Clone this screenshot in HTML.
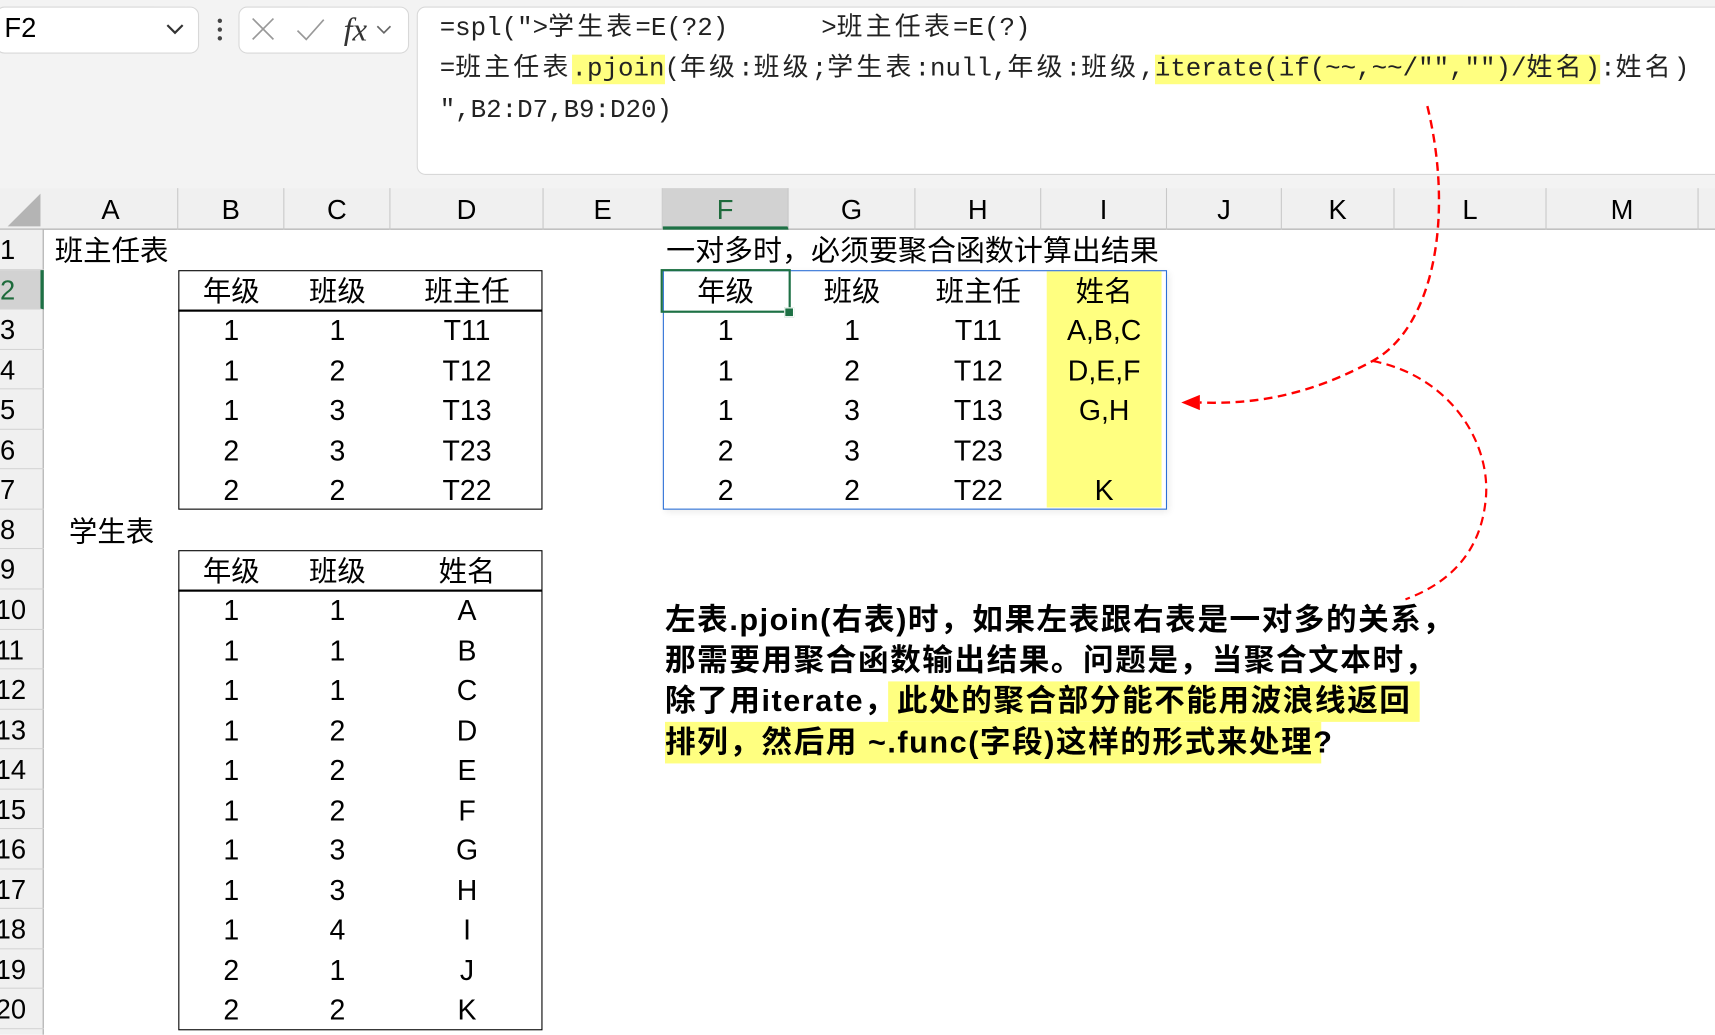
<!DOCTYPE html>
<html><head><meta charset="utf-8"><style>
html,body{margin:0;padding:0;width:1715px;height:1035px;overflow:hidden;background:#fff}
#w{position:absolute;left:0;top:0;width:1568px;height:946px;transform:scale(1.09375);transform-origin:0 0;font-family:"Liberation Sans","Noto Sans CJK SC",sans-serif;color:#000}
.a{position:absolute}
.c{position:absolute;height:36.5px;line-height:38px;text-align:center;font-size:26px}
.hd{position:absolute;top:172px;height:38px;line-height:40px;text-align:center;font-size:25px;border-right:1px solid #c8c8c8;box-sizing:border-box}
.rh{position:absolute;left:0;width:40px;height:36.55px;line-height:38px;font-size:25px;border-bottom:1px solid #d4d4d4;box-sizing:border-box;text-indent:0px}
.f{font-family:"Liberation Mono","Noto Sans CJK SC",monospace;font-size:23.6px;white-space:pre;position:absolute;left:402px;color:#222}
.k{letter-spacing:3px}
.y{background:#ffff80}
.p{position:absolute;left:608px;font-weight:bold;font-size:28px;letter-spacing:1.4px;white-space:nowrap;height:37px;line-height:37px}
</style></head><body><div id="w">
<div class="a" style="left:0;top:0;width:1568px;height:172px;background:#f3f3f3"></div>
<div class="a" style="left:-4px;top:6px;width:184px;height:41px;background:#fff;border:1px solid #d8d8d8;border-radius:8px"></div>
<div class="a" style="left:4px;top:10px;font-size:25px;line-height:32px">F2</div>
<svg class="a" style="left:150px;top:18px" width="20" height="16"><path d="M3 5 L10 12 L17 5" stroke="#333" stroke-width="2" fill="none"/></svg>
<div class="a" style="left:199px;top:17px;width:4px;height:4px;background:#444;border-radius:2px"></div>
<div class="a" style="left:199px;top:25px;width:4px;height:4px;background:#444;border-radius:2px"></div>
<div class="a" style="left:199px;top:33px;width:4px;height:4px;background:#444;border-radius:2px"></div>
<div class="a" style="left:218px;top:6px;width:154px;height:41px;background:#fff;border:1px solid #d8d8d8;border-radius:8px"></div>
<svg class="a" style="left:228px;top:12px" width="140" height="30"><path d="M3 5 L22 24 M22 5 L3 24" stroke="#999" stroke-width="1.5"/><path d="M44 16 L52 24 L68 6" stroke="#999" stroke-width="1.5" fill="none"/><text x="86" y="25" font-family="Liberation Serif,serif" font-style="italic" font-size="30" fill="#333">fx</text><path d="M117 12 L123 18 L129 12" stroke="#666" stroke-width="1.5" fill="none"/></svg>
<div class="a" style="left:381px;top:6px;width:1200px;height:152px;background:#fff;border:1px solid #d8d8d8;border-radius:8px"></div>
<div class="f" style="top:11px;line-height:32px">=spl("&gt;<span class="k">学生表</span>=E(?2)      &gt;<span class="k">班主任表</span>=E(?)</div>
<div class="f" style="top:47px;line-height:34px">=<span class="k">班主任表</span><span class="y">.pjoin</span>(<span class="k">年级</span>:<span class="k">班级</span>;<span class="k">学生表</span>:null,<span class="k">年级</span>:<span class="k">班级</span>,<span class="y">iterate(if(~~,~~/"","")/<span class="k">姓名</span>)</span>:<span class="k">姓名</span>)</div>
<div class="f" style="top:86px;line-height:32px">",B2:D7,B9:D20)</div>
<div class="a" style="left:0;top:172px;width:1568px;height:38px;background:#f0f0f0;border-bottom:1px solid #a8a8a8;box-sizing:border-box"></div>
<svg class="a" style="left:0;top:172px" width="40" height="38"><path d="M37 5 L37 35 L7 35 Z" fill="#b4b4b4"/></svg>
<div class="hd" style="left:40px;width:123px">A</div>
<div class="hd" style="left:163px;width:97px">B</div>
<div class="hd" style="left:260px;width:97px">C</div>
<div class="hd" style="left:357px;width:140px">D</div>
<div class="hd" style="left:497px;width:109px">E</div>
<div class="hd" style="left:606px;width:115px;background:#d2d2d2;color:#1e6b3c;border-bottom:3px solid #1e7145">F</div>
<div class="hd" style="left:721px;width:116px">G</div>
<div class="hd" style="left:837px;width:115px">H</div>
<div class="hd" style="left:952px;width:115px">I</div>
<div class="hd" style="left:1067px;width:105px">J</div>
<div class="hd" style="left:1172px;width:103px">K</div>
<div class="hd" style="left:1275px;width:139px">L</div>
<div class="hd" style="left:1414px;width:139px">M</div>
<div class="a" style="left:0;top:210px;width:40px;height:736px;background:#f0f0f0;border-right:1px solid #a8a8a8;box-sizing:border-box"></div>
<div class="rh" style="top:210px">1</div>
<div class="rh" style="top:246.5px;background:#d2d2d2;color:#1e6b3c;border-right:3px solid #1e7145">2</div>
<div class="rh" style="top:283.1px">3</div>
<div class="rh" style="top:319.6px">4</div>
<div class="rh" style="top:356.2px">5</div>
<div class="rh" style="top:392.7px">6</div>
<div class="rh" style="top:429.3px">7</div>
<div class="rh" style="top:465.8px">8</div>
<div class="rh" style="top:502.4px">9</div>
<div class="rh" style="top:539px;text-indent:-4px">10</div>
<div class="rh" style="top:575.5px;text-indent:-4px">11</div>
<div class="rh" style="top:612px;text-indent:-4px">12</div>
<div class="rh" style="top:648.6px;text-indent:-4px">13</div>
<div class="rh" style="top:685px;text-indent:-4px">14</div>
<div class="rh" style="top:721.7px;text-indent:-4px">15</div>
<div class="rh" style="top:758.2px;text-indent:-4px">16</div>
<div class="rh" style="top:794.8px;text-indent:-4px">17</div>
<div class="rh" style="top:831.3px;text-indent:-4px">18</div>
<div class="rh" style="top:867.9px;text-indent:-4px">19</div>
<div class="rh" style="top:904.4px;text-indent:-4px">20</div>
<div class="c" style="left:50px;top:210px;text-align:left">班主任表</div>
<div class="c" style="left:63px;top:467px;text-align:left">学生表</div>
<div class="c" style="left:609px;top:210px;text-align:left;white-space:nowrap;font-size:26.5px">一对多时，必须要聚合函数计算出结果</div>
<div class="a" style="left:163px;top:247px;width:333px;height:219px;border:1px solid #000;box-sizing:border-box"></div>
<div class="a" style="left:163px;top:283px;width:333px;height:1.5px;background:#000"></div>
<div class="c" style="left:163px;width:97px;top:247px">年级</div><div class="c" style="left:260px;width:97px;top:247px">班级</div><div class="c" style="left:357px;width:140px;top:247px">班主任</div>
<div class="c" style="left:163px;width:97px;top:283.1px">1</div><div class="c" style="left:260px;width:97px;top:283.1px">1</div><div class="c" style="left:357px;width:140px;top:283.1px">T11</div>
<div class="c" style="left:163px;width:97px;top:319.6px">1</div><div class="c" style="left:260px;width:97px;top:319.6px">2</div><div class="c" style="left:357px;width:140px;top:319.6px">T12</div>
<div class="c" style="left:163px;width:97px;top:356.2px">1</div><div class="c" style="left:260px;width:97px;top:356.2px">3</div><div class="c" style="left:357px;width:140px;top:356.2px">T13</div>
<div class="c" style="left:163px;width:97px;top:392.7px">2</div><div class="c" style="left:260px;width:97px;top:392.7px">3</div><div class="c" style="left:357px;width:140px;top:392.7px">T23</div>
<div class="c" style="left:163px;width:97px;top:429.3px">2</div><div class="c" style="left:260px;width:97px;top:429.3px">2</div><div class="c" style="left:357px;width:140px;top:429.3px">T22</div>
<div class="a" style="left:163px;top:503px;width:333px;height:439px;border:1px solid #000;box-sizing:border-box"></div>
<div class="a" style="left:163px;top:539px;width:333px;height:1.5px;background:#000"></div>
<div class="c" style="left:163px;width:97px;top:503px">年级</div><div class="c" style="left:260px;width:97px;top:503px">班级</div><div class="c" style="left:357px;width:140px;top:503px">姓名</div>
<div class="c" style="left:163px;width:97px;top:539px">1</div><div class="c" style="left:260px;width:97px;top:539px">1</div><div class="c" style="left:357px;width:140px;top:539px">A</div>
<div class="c" style="left:163px;width:97px;top:575.5px">1</div><div class="c" style="left:260px;width:97px;top:575.5px">1</div><div class="c" style="left:357px;width:140px;top:575.5px">B</div>
<div class="c" style="left:163px;width:97px;top:612px">1</div><div class="c" style="left:260px;width:97px;top:612px">1</div><div class="c" style="left:357px;width:140px;top:612px">C</div>
<div class="c" style="left:163px;width:97px;top:648.6px">1</div><div class="c" style="left:260px;width:97px;top:648.6px">2</div><div class="c" style="left:357px;width:140px;top:648.6px">D</div>
<div class="c" style="left:163px;width:97px;top:685px">1</div><div class="c" style="left:260px;width:97px;top:685px">2</div><div class="c" style="left:357px;width:140px;top:685px">E</div>
<div class="c" style="left:163px;width:97px;top:721.7px">1</div><div class="c" style="left:260px;width:97px;top:721.7px">2</div><div class="c" style="left:357px;width:140px;top:721.7px">F</div>
<div class="c" style="left:163px;width:97px;top:758.2px">1</div><div class="c" style="left:260px;width:97px;top:758.2px">3</div><div class="c" style="left:357px;width:140px;top:758.2px">G</div>
<div class="c" style="left:163px;width:97px;top:794.8px">1</div><div class="c" style="left:260px;width:97px;top:794.8px">3</div><div class="c" style="left:357px;width:140px;top:794.8px">H</div>
<div class="c" style="left:163px;width:97px;top:831.3px">1</div><div class="c" style="left:260px;width:97px;top:831.3px">4</div><div class="c" style="left:357px;width:140px;top:831.3px">I</div>
<div class="c" style="left:163px;width:97px;top:867.9px">2</div><div class="c" style="left:260px;width:97px;top:867.9px">1</div><div class="c" style="left:357px;width:140px;top:867.9px">J</div>
<div class="c" style="left:163px;width:97px;top:904.4px">2</div><div class="c" style="left:260px;width:97px;top:904.4px">2</div><div class="c" style="left:357px;width:140px;top:904.4px">K</div>
<div class="a" style="left:957px;top:248px;width:105px;height:216px;background:#ffff80"></div>
<div class="a" style="left:606px;top:247px;width:461px;height:219px;border:1px solid #2b6fd6;box-sizing:border-box;box-shadow:2px 2px 6px rgba(0,0,0,0.08)"></div>
<div class="a" style="left:604px;top:246px;width:119px;height:40px;border:2.5px solid #1e7145;box-sizing:border-box"></div>
<div class="a" style="left:717px;top:281px;width:7px;height:7px;background:#1e7145;border:1px solid #fff"></div>
<div class="c" style="left:606px;width:115px;top:247px">年级</div><div class="c" style="left:721px;width:116px;top:247px">班级</div><div class="c" style="left:837px;width:115px;top:247px">班主任</div><div class="c" style="left:952px;width:115px;top:247px">姓名</div>
<div class="c" style="left:606px;width:115px;top:283.1px">1</div><div class="c" style="left:721px;width:116px;top:283.1px">1</div><div class="c" style="left:837px;width:115px;top:283.1px">T11</div><div class="c" style="left:952px;width:115px;top:283.1px">A,B,C</div>
<div class="c" style="left:606px;width:115px;top:319.6px">1</div><div class="c" style="left:721px;width:116px;top:319.6px">2</div><div class="c" style="left:837px;width:115px;top:319.6px">T12</div><div class="c" style="left:952px;width:115px;top:319.6px">D,E,F</div>
<div class="c" style="left:606px;width:115px;top:356.2px">1</div><div class="c" style="left:721px;width:116px;top:356.2px">3</div><div class="c" style="left:837px;width:115px;top:356.2px">T13</div><div class="c" style="left:952px;width:115px;top:356.2px">G,H</div>
<div class="c" style="left:606px;width:115px;top:392.7px">2</div><div class="c" style="left:721px;width:116px;top:392.7px">3</div><div class="c" style="left:837px;width:115px;top:392.7px">T23</div>
<div class="c" style="left:606px;width:115px;top:429.3px">2</div><div class="c" style="left:721px;width:116px;top:429.3px">2</div><div class="c" style="left:837px;width:115px;top:429.3px">T22</div><div class="c" style="left:952px;width:115px;top:429.3px">K</div>
<div class="p" style="top:548px">左表.pjoin(右表)时，如果左表跟右表是一对多的关系，</div>
<div class="p" style="top:585px">那需要用聚合函数输出结果。问题是，当聚合文本时，</div>
<div class="a" style="left:812px;top:623px;width:486px;height:37px;background:#ffff80"></div>
<div class="a" style="left:608px;top:660px;width:600px;height:38px;background:#ffff80"></div>
<div class="p" style="top:622px">除了用iterate，<span style="position:absolute;left:212px">此处的聚合部分能不能用波浪线返回</span></div>
<div class="p" style="top:660px">排列，然后用 ~.func(字段)这样的形式来处理?</div>
<svg class="a" style="left:0;top:0" width="1568" height="946">
<path d="M1305 97 C1330 200 1310 300 1255 330 C1200 360 1150 370 1097 368" stroke="#f00" stroke-width="2.2" fill="none" stroke-dasharray="8 5"/>
<path d="M1080 368 L1097 361 L1097 375 Z" fill="#f00"/>
<path d="M1255 330 C1330 345 1365 410 1358 460 C1352 510 1320 535 1285 548" stroke="#f00" stroke-width="2" fill="none" stroke-dasharray="8 5"/>
</svg>
</div></body></html>
